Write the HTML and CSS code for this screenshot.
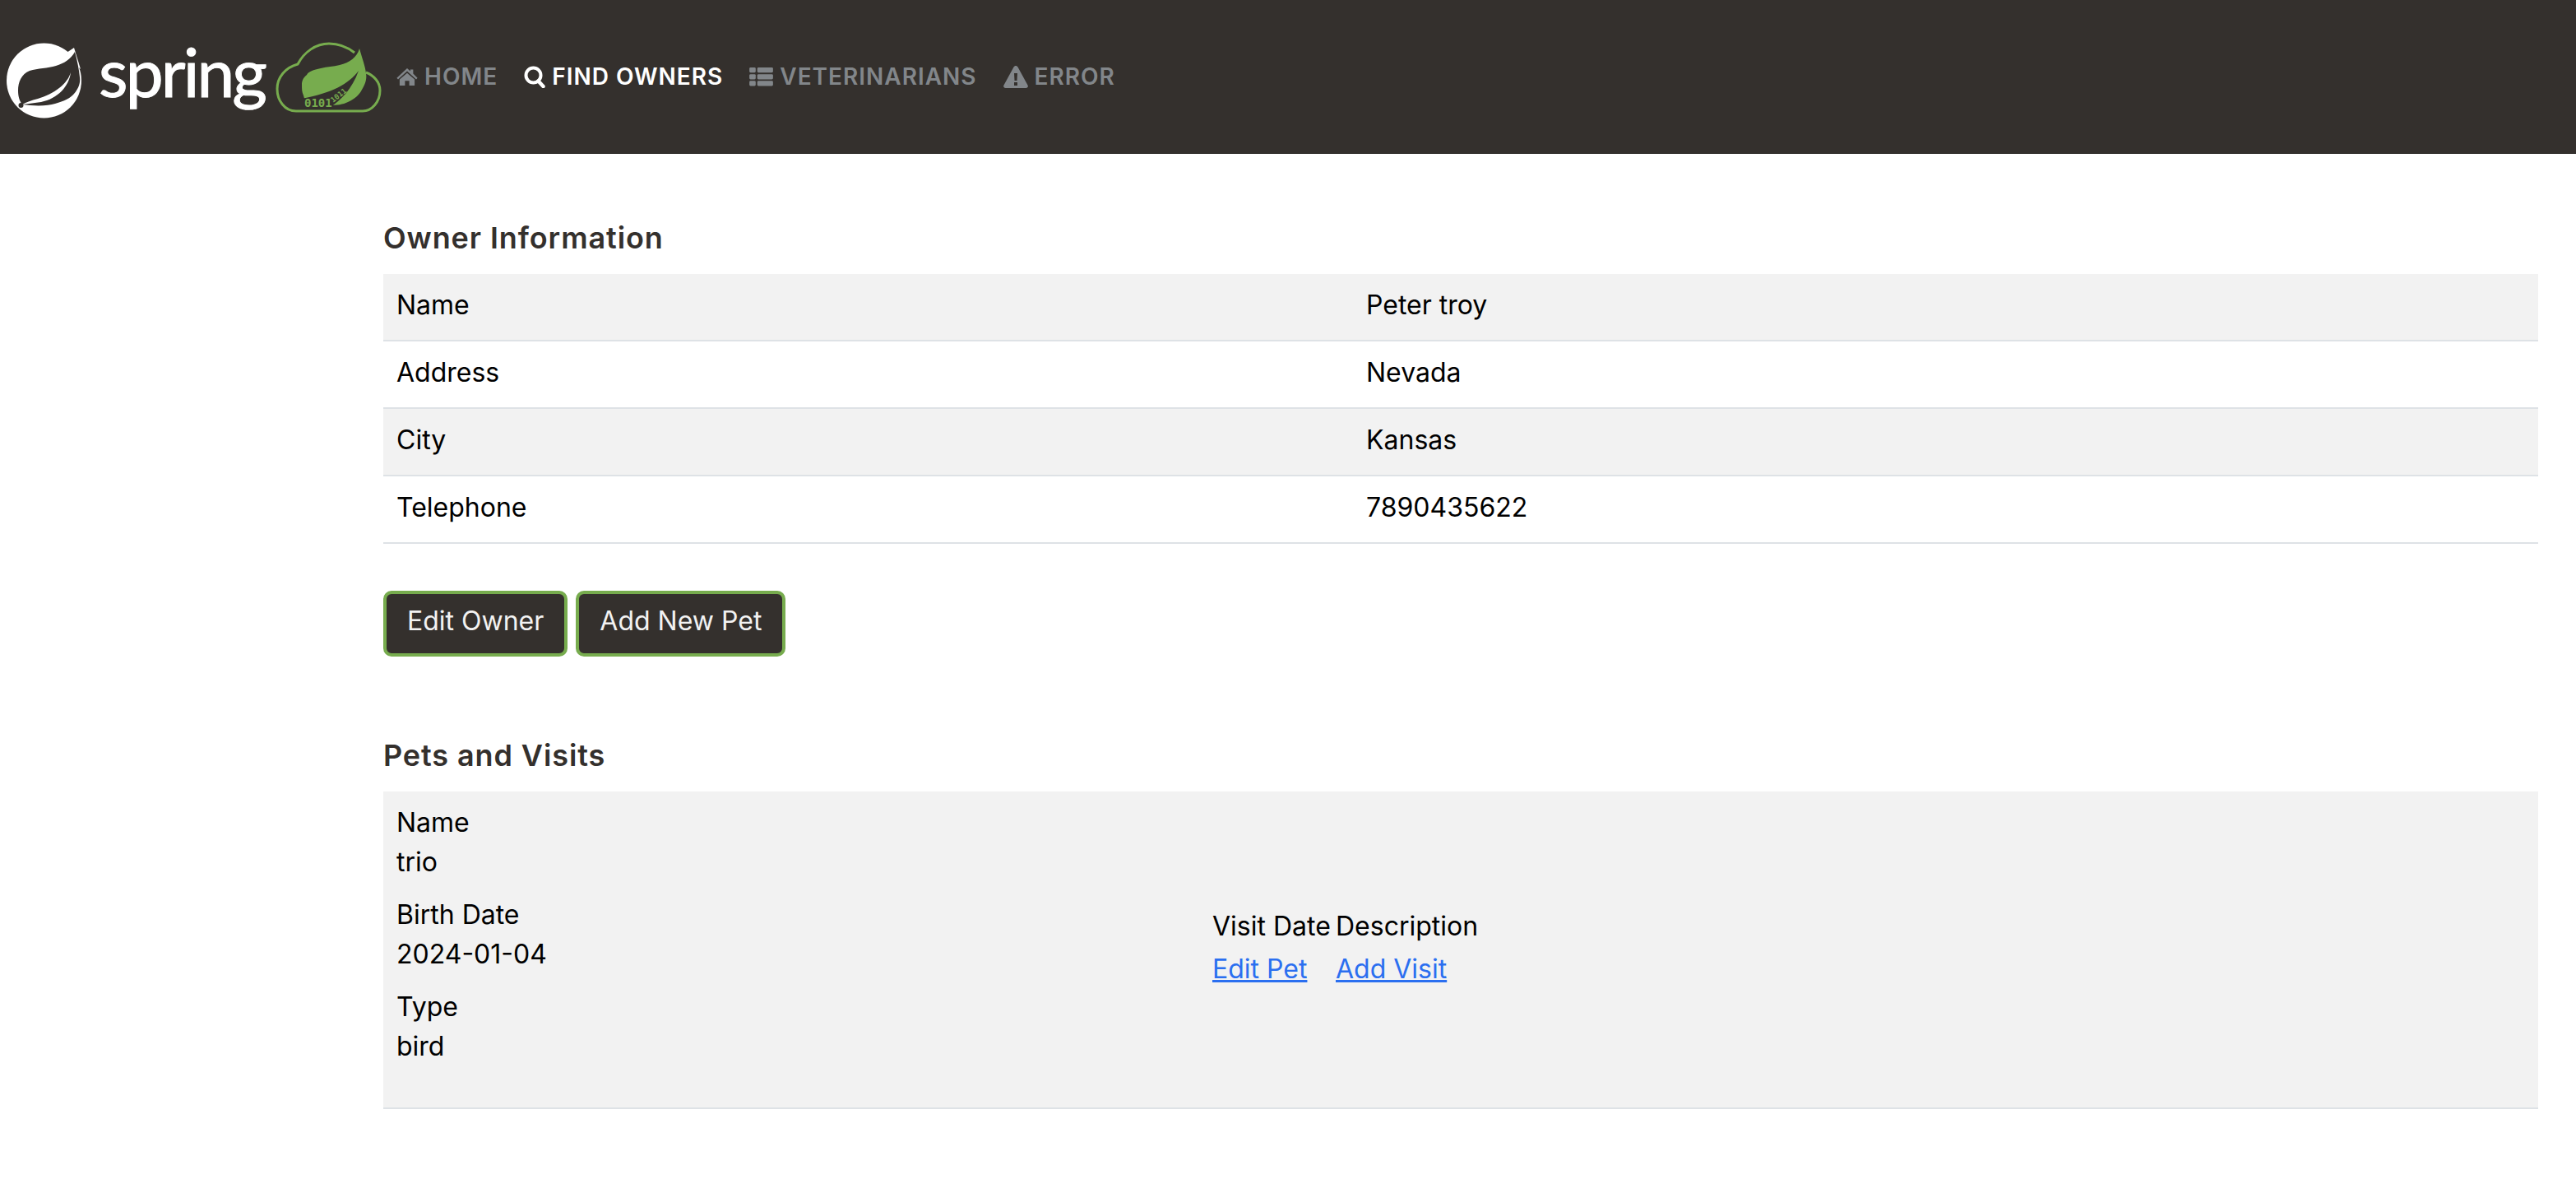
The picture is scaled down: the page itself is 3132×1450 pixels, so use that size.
FILE: index.html
```html
<!DOCTYPE html>
<html lang="en">
<head>
<meta charset="utf-8">
<title>PetClinic</title>
<link rel="stylesheet" href="styles.css">
</head>
<body>
<nav class="navbar">
  <svg class="logo" viewBox="0 0 466 186" width="466" height="186" aria-label="Spring">
    <circle cx="53.500" cy="98" r="45.500" fill="#fff"/>
    <path fill="#fff" d="M90 58L78 66l20 18z"/>
    <path fill="#34302d" d="M91 63C86 72 78 77 68 80C58 83 46 83 36 86C26 90 22 100 22 110C22 118 24 123 27 127L37 128C50 129 60 128 67 126C78 123 86 119 90 114C96 107 98 100 97 94C96 84 94 74 91 63Z"/>
    <path fill="#fff" d="M86 88C82 102 66 114 46 120C38 122 32 124 27 127C36 126 42 125 50 124C70 120 84 105 86 88Z"/>
    <circle cx="25.500" cy="128" r="3" fill="#34302d"/>
    <text class="logo-word" x="120" y="118" textLength="205">spring</text>
    <path fill="none" stroke="#77ac4e" stroke-width="3" d="M431 64C422 57 412 53 400 53C384 53 370 63 362 78C347 82 337 94 337 108C337 122 346 135 360 135H441C452 135 462 124 462 110C462 100 455 92 445 88"/>
    <path fill="#77ac4e" d="M437 59C434 70 425 76 413 79C405 81 398 81 390 83C381 85 375 87 373 91C368 95 367 99 367 103C367 108 367 112 369 116L372 127L400 128C410 128 417 127 423 124C432 120 437 115 440 109C445 101 446 95 445 89C444 80 440 70 437 59Z"/>
    <path fill="#34302d" d="M436 86C424 102 404 113 366 120V131H400C415 122 428 108 436 86Z"/>
    <text class="logo-bits" x="370" y="130">0101</text>
    <text class="logo-bits-small" transform="translate(405 125) rotate(-38)">1011</text>
  </svg>
  <ul class="nav-list">
    <li><a class="nav-link" href="#"><svg class="nav-icon home-icon" viewBox="0 0 30 24"><path fill="currentColor" d="M15 0l4.500 4V1.500h4v6l6 6-1.800 2L15 4 2.300 15.500.5 13.500zM4.500 15.500L15 6.500l10.500 9V24H18v-6.500h-6V24H4.500z"/></svg>HOME</a></li>
    <li><a class="nav-link active" href="#"><svg class="nav-icon search-icon" viewBox="0 0 26 27"><circle cx="11.500" cy="11.500" r="9" fill="none" stroke="currentColor" stroke-width="4"/><path d="M17.500 18.500l6 6.500" fill="none" stroke="currentColor" stroke-width="4.500" stroke-linecap="round"/></svg>FIND OWNERS</a></li>
    <li><a class="nav-link" href="#"><svg class="nav-icon list-icon" viewBox="0 0 30 24"><g fill="currentColor"><rect width="8" height="6.500" rx="1.500"/><rect x="10" width="20" height="6.500" rx="1.500"/><rect y="8.500" width="8" height="6.500" rx="1.500"/><rect x="10" y="8.500" width="20" height="6.500" rx="1.500"/><rect y="17" width="8" height="6.500" rx="1.500"/><rect x="10" y="17" width="20" height="6.500" rx="1.500"/></g></svg>VETERINARIANS</a></li>
    <li><a class="nav-link" href="#"><svg class="nav-icon warn-icon" viewBox="0 0 30 27"><path fill="currentColor" fill-rule="evenodd" d="M15 0c1 0 2 .6 2.500 1.500l12 22c1 2-.3 3.500-2 3.500H2.500c-1.700 0-3-1.500-2-3.500l12-22C13 .6 14 0 15 0zM13 9l.5 9h3L17 9zM13 20v4h4v-4z"/></svg>ERROR</a></li>
  </ul>
</nav>
<main class="container">
  <h2 class="section-title">Owner Information</h2>
  <table class="table">
    <tbody>
      <tr><th class="label-col">Name</th><td>Peter troy</td></tr>
      <tr><th>Address</th><td>Nevada</td></tr>
      <tr><th>City</th><td>Kansas</td></tr>
      <tr><th>Telephone</th><td>7890435622</td></tr>
    </tbody>
  </table>
  <div class="actions">
    <a class="btn" href="#">Edit Owner</a>
    <a class="btn" href="#">Add New Pet</a>
  </div>
  <h2 class="section-title pets-title">Pets and Visits</h2>
  <table class="table pets">
    <tbody>
      <tr>
        <td class="pet-col">
          <dl class="pet-details">
            <dt>Name</dt><dd>trio</dd>
            <dt>Birth Date</dt><dd>2024-01-04</dd>
            <dt>Type</dt><dd>bird</dd>
          </dl>
        </td>
        <td class="visits-col">
          <table class="visits">
            <thead><tr><th class="visit-date">Visit Date</th><th>Description</th></tr></thead>
            <tbody><tr><td><a href="#">Edit Pet</a></td><td><a href="#">Add Visit</a></td></tr></tbody>
          </table>
        </td>
      </tr>
    </tbody>
  </table>
</main>
</body>
</html>
```
FILE: styles.css
```css
* { box-sizing: border-box; }
html, body { margin: 0; padding: 0; }
body {
  background: #fff;
  color: #000;
  font-family: "Inter", "Open Sans", sans-serif;
  font-size: 32px;
  line-height: 48px;
}
.navbar {
  display: flex;
  align-items: center;
  height: 187px;
  background: #34302d;
  border-bottom: 1px solid #2a2724;
}
.logo { flex: none; display: block; }
.logo-word { font-family: "Lato", sans-serif; font-size: 82px; font-weight: 400; fill: #fff; stroke: #fff; stroke-width: 1px; }
.logo-bits { font-family: "DejaVu Sans Mono", monospace; font-size: 14px; font-weight: 700; fill: #77ac4e; }
.logo-bits-small { font-family: "DejaVu Sans Mono", monospace; font-size: 9px; font-weight: 700; fill: #77ac4e; }
.nav-list { display: flex; list-style: none; margin: 0; padding: 0 0 0 16px; gap: 32px; }
.nav-link {
  display: flex;
  align-items: center;
  gap: 8px;
  color: #82868a;
  font-size: 28px;
  font-weight: 600;
  letter-spacing: 1px;
  text-decoration: none;
}
.nav-link.active { color: #fff; }
.nav-icon { display: block; flex: none; }
.home-icon { width: 26px; height: 21px; }
.search-icon { width: 26px; height: 27px; }
.list-icon { width: 29px; height: 23px; }
.warn-icon { width: 30px; height: 27px; }
.container { margin: 0 46px 0 466px; }
.section-title {
  margin: 0;
  padding-top: 78px;
  padding-bottom: 20px;
  color: #34302d;
  font-size: 36px;
  font-weight: 600;
  letter-spacing: .9px;
  line-height: 48px;
}
.table { width: 100%; border-collapse: collapse; }
.table > tbody > tr > th, .table > tbody > tr > td {
  padding: 14px 16px 18px;
  text-align: left;
  font-weight: 400;
  border-bottom: 2px solid #dee2e6;
}
.table > tbody > tr:nth-child(odd) > * { background: #f2f2f2; }
.label-col { width: 45%; }
.actions { display: flex; gap: 10px; margin-top: 57px; }
.btn {
  display: block;
  height: 80px;
  padding: 8px 25px 12px;
  border: 4px solid #77ac4e;
  border-radius: 10px;
  background: #34302d;
  color: #f2f2f2;
  line-height: 50px;
  text-decoration: none;
}
.pets-title { padding-top: 96px; }
.pet-col { width: 992px; }
.pet-details { margin: 0 0 32px; }
.pet-details dt { font-weight: 400; }
.pet-details dd { margin: 0 0 16px; }
.visits { border-collapse: separate; border-spacing: 0; margin-top: 4px; }
.visits th, .visits td { padding: 0 0 4px; text-align: left; font-weight: 400; }
.visit-date { width: 150px; }
.visits a { color: #2b6ff0; }
```
